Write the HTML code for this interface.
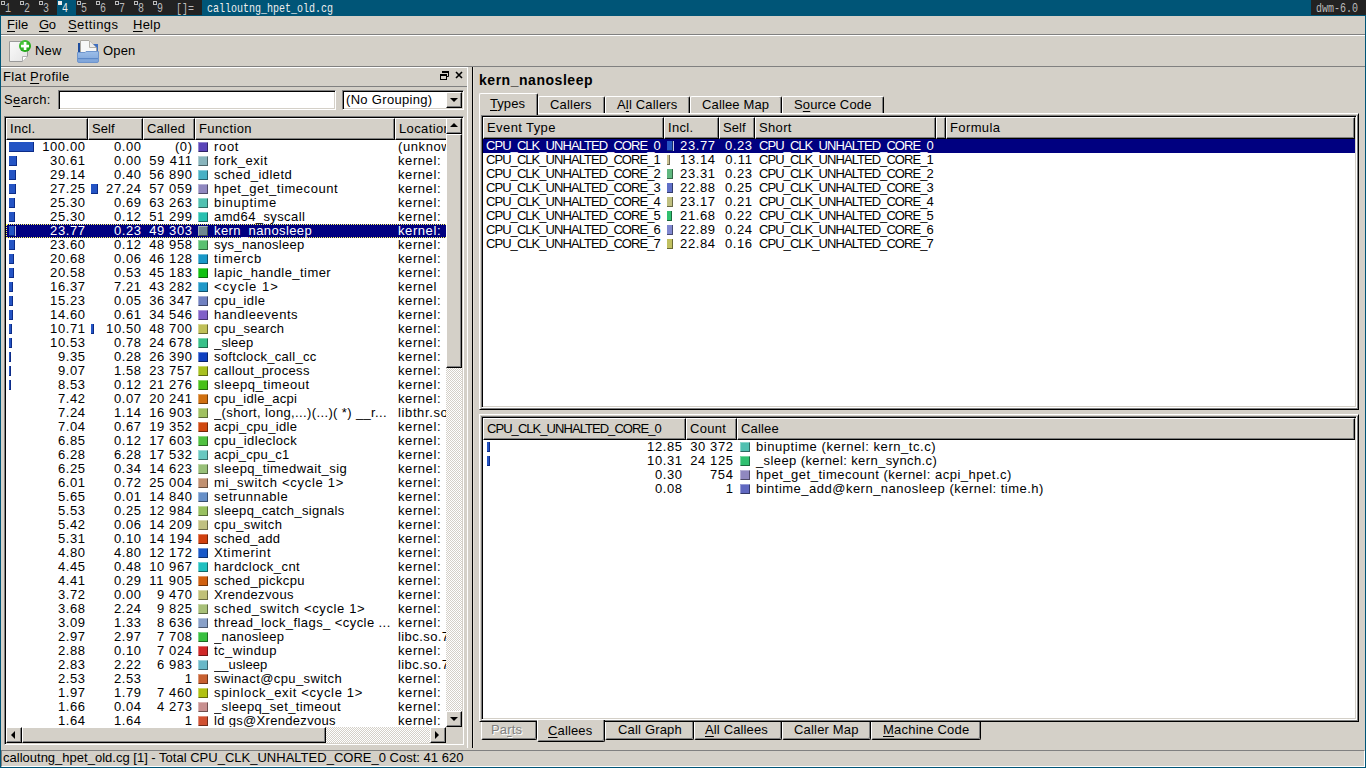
<!DOCTYPE html><html><head><meta charset="utf-8"><style>
*{margin:0;padding:0}
html,body{width:1366px;height:768px;overflow:hidden;background:#d4d0c8;}
body{position:relative;font-family:"Liberation Sans",sans-serif;font-size:13px;line-height:14px;color:#000;}
div{position:absolute;}
svg{position:absolute;}
.t{white-space:pre;height:14px;}
u{text-decoration:underline;text-underline-offset:2px;text-decoration-thickness:1px;}
.m{font-family:"Liberation Mono",monospace;font-size:10px;line-height:10px;white-space:pre;transform:scaleY(1.3);transform-origin:0 0;}
.rz{box-sizing:border-box;background:#d4d0c8;border-top:1px solid #fff;border-left:1px solid #fff;border-right:1px solid #000;border-bottom:1px solid #000;box-shadow:inset -1px -1px 0 #808080;}
.sk{box-sizing:border-box;border-top:1px solid #808080;border-left:1px solid #808080;border-right:1px solid #fff;border-bottom:1px solid #fff;box-shadow:inset 1px 1px 0 #000,inset -1px -1px 0 #d4d0c8;}
.pane{box-sizing:border-box;border-top:1px solid #fff;border-left:1px solid #fff;border-right:1px solid #000;border-bottom:1px solid #000;box-shadow:inset 1px 1px 0 #d4d0c8,inset -1px -1px 0 #808080;}
.tabt{box-sizing:border-box;background:#d4d0c8;border-top:1px solid #fff;border-left:1px solid #fff;border-right:1px solid #000;box-shadow:inset -1px 0 0 #808080;border-radius:2px 2px 0 0;}
.tabt.sel{height:22px;}
.tabb{box-sizing:border-box;background:#d4d0c8;border-bottom:1px solid #000;border-left:1px solid #fff;border-right:1px solid #000;box-shadow:inset -1px -1px 0 #808080;border-radius:0 0 2px 2px;}
.tri-d{width:0;height:0;border-left:4px solid transparent;border-right:4px solid transparent;border-top:4px solid #000;}
.tri-u{width:0;height:0;border-left:4px solid transparent;border-right:4px solid transparent;border-bottom:4px solid #000;}
.tri-l{width:0;height:0;border-top:4px solid transparent;border-bottom:4px solid transparent;border-right:4px solid #000;}
.tri-r{width:0;height:0;border-top:4px solid transparent;border-bottom:4px solid transparent;border-left:4px solid #000;}
</style></head><body>
<div style="left:0px;top:0px;width:1366px;height:15px;background:#222;"></div>
<div style="left:1px;top:1px;width:4px;height:4px;border:1px solid #bbb;box-sizing:border-box;"></div>
<div class="m" style="left:5px;top:3px;color:#bbb;">1</div>
<div style="left:20px;top:1px;width:4px;height:4px;border:1px solid #bbb;box-sizing:border-box;"></div>
<div class="m" style="left:24px;top:3px;color:#bbb;">2</div>
<div style="left:39px;top:1px;width:4px;height:4px;border:1px solid #bbb;box-sizing:border-box;"></div>
<div class="m" style="left:43px;top:3px;color:#bbb;">3</div>
<div style="left:57px;top:0px;width:19px;height:15px;background:#005577;"></div>
<div style="left:58px;top:1px;width:4px;height:4px;background:#eee;"></div>
<div class="m" style="left:62px;top:3px;color:#eee;">4</div>
<div style="left:77px;top:1px;width:4px;height:4px;border:1px solid #bbb;box-sizing:border-box;"></div>
<div class="m" style="left:81px;top:3px;color:#bbb;">5</div>
<div style="left:96px;top:1px;width:4px;height:4px;border:1px solid #bbb;box-sizing:border-box;"></div>
<div class="m" style="left:100px;top:3px;color:#bbb;">6</div>
<div style="left:115px;top:1px;width:4px;height:4px;border:1px solid #bbb;box-sizing:border-box;"></div>
<div class="m" style="left:119px;top:3px;color:#bbb;">7</div>
<div style="left:134px;top:1px;width:4px;height:4px;border:1px solid #bbb;box-sizing:border-box;"></div>
<div class="m" style="left:138px;top:3px;color:#bbb;">8</div>
<div style="left:153px;top:1px;width:4px;height:4px;border:1px solid #bbb;box-sizing:border-box;"></div>
<div class="m" style="left:157px;top:3px;color:#bbb;">9</div>
<div class="m" style="left:176px;top:3px;color:#bbb;">[]=</div>
<div style="left:202px;top:0px;width:1109px;height:15px;background:#005577;"></div>
<div class="m" style="left:207px;top:3px;color:#eee;">calloutng_hpet_old.cg</div>
<div class="m" style="left:1316px;top:3px;color:#bbb;">dwm-6.0</div>
<div style="left:0px;top:15px;width:1366px;height:1px;background:#005577;"></div>
<div style="left:0px;top:15px;width:1px;height:753px;background:#005577;"></div>
<div style="left:1365px;top:15px;width:1px;height:753px;background:#005577;"></div>
<div style="left:0px;top:767px;width:1366px;height:1px;background:#005577;"></div>
<div class="t" style="left:7px;top:18px;letter-spacing:0.054px;"><u>F</u>ile</div>
<div class="t" style="left:39px;top:18px;letter-spacing:-0.409px;"><u>G</u>o</div>
<div class="t" style="left:68px;top:18px;letter-spacing:0.425px;"><u>S</u>ettings</div>
<div class="t" style="left:133px;top:18px;letter-spacing:0.226px;"><u>H</u>elp</div>
<div style="left:1px;top:34px;width:1364px;height:1px;background:#808080;"></div>
<div style="left:1px;top:35px;width:1364px;height:1px;background:#fff;"></div>
<div style="left:1px;top:66px;width:1364px;height:1px;background:#808080;"></div>
<div style="left:1px;top:67px;width:467px;height:1px;background:#fff;"></div>
<div style="left:473px;top:67px;width:1px;height:681px;background:#e4e0d8;"></div>
<div class="t" style="left:35px;top:44px;letter-spacing:0.138px;">New</div>
<div class="t" style="left:103px;top:44px;letter-spacing:0.170px;">Open</div>
<svg style="position:absolute;left:8px;top:39px" width="26" height="24" viewBox="0 0 26 24">
<defs><linearGradient id="pg" x1="0" y1="0" x2="1" y2="1"><stop offset="0" stop-color="#fafafa"/><stop offset="1" stop-color="#e4e4e4"/></linearGradient>
<radialGradient id="gr" cx="0.4" cy="0.35" r="0.7"><stop offset="0" stop-color="#5ad04a"/><stop offset="1" stop-color="#18a010"/></radialGradient></defs>
<path d="M1.5 2.5 H15.5 L19.5 6.5 V17.5 L14.5 22.5 H1.5 Z" fill="url(#pg)" stroke="#9a9a9a"/>
<path d="M14.5 22.5 V17.5 H19.5" fill="#fff" stroke="#b0b0b0"/>
<circle cx="17" cy="7" r="6" fill="url(#gr)"/>
<rect x="15.8" y="3" width="2.6" height="8" fill="#fff"/><rect x="13" y="5.8" width="8" height="2.6" fill="#fff"/>
</svg>
<svg style="position:absolute;left:72px;top:36px" width="32" height="28" viewBox="0 0 32 28">
<defs><linearGradient id="fb" x1="0" y1="0" x2="0" y2="1"><stop offset="0" stop-color="#9cbee9"/><stop offset="1" stop-color="#7da3d8"/></linearGradient></defs>
<rect x="6" y="7" width="3" height="10" fill="#1e4c9c"/>
<path d="M20 8 H26 V17 H20 Z" fill="#3f6fc0"/>
<path d="M8.5 4.5 H17 L24.5 12 V16.5 H8.5 Z" fill="#f7f7f7" stroke="#a9a6a0"/>
<path d="M17.5 5 V11.5 H24" fill="#ececec" stroke="#b4b0a8"/>
<path d="M5.5 16.5 H13 L14 15.5 H26.5 V25 Q26.5 26.5 25 26.5 H7 Q5.5 26.5 5.5 25 Z" fill="url(#fb)" stroke="#6f95cc"/>
<rect x="6" y="22" width="20" height="1.2" fill="#5d89c8"/>
</svg>
<div class="t" style="left:3px;top:70px;letter-spacing:0.363px;">Flat <u>P</u>rofile</div>
<svg style="position:absolute;left:439px;top:70px" width="26" height="12" viewBox="0 0 26 12">
<path d="M3.5 1.5 H9.5 V6.5 H7.5" fill="none" stroke="#000" stroke-width="1"/>
<rect x="3" y="1" width="7" height="2" fill="#000"/>
<rect x="1.5" y="4.5" width="6" height="5" fill="none" stroke="#000"/>
<rect x="1" y="4" width="7" height="2" fill="#000"/>
<path d="M17 2 L23 8 M23 2 L17 8" stroke="#000" stroke-width="1.6"/>
</svg>
<div style="left:1px;top:86px;width:466px;height:1px;background:#808080;"></div>
<div class="t" style="left:4px;top:93px;letter-spacing:0.253px;">S<u>e</u>arch:</div>
<div class="sk" style="left:58px;top:90px;width:278px;height:20px;background:#fff;"></div>
<div class="sk" style="left:342px;top:90px;width:122px;height:20px;background:#fff;"></div>
<div class="t" style="left:346px;top:93px;letter-spacing:0.315px;">(No Grouping)</div>
<div class="rz" style="left:446px;top:92px;width:16px;height:16px;"></div>
<div class="tri-d" style="left:450px;top:98px;"></div>
<div class="sk" style="left:4px;top:116px;width:460px;height:629px;background:#fff;"></div>
<div style="left:6px;top:118px;width:440px;height:22px;overflow:hidden;">
<div class="rz" style="left:0px;top:0px;width:82px;height:22px;"></div>
<div class="t" style="left:4px;top:4px;letter-spacing:0.330px;">Incl.</div>
<div class="rz" style="left:82px;top:0px;width:55px;height:22px;"></div>
<div class="t" style="left:86px;top:4px;letter-spacing:0.094px;">Self</div>
<div class="rz" style="left:137px;top:0px;width:52px;height:22px;"></div>
<div class="t" style="left:141px;top:4px;letter-spacing:0.202px;">Called</div>
<div class="rz" style="left:189px;top:0px;width:200px;height:22px;"></div>
<div class="t" style="left:193px;top:4px;letter-spacing:0.390px;">Function</div>
<div class="rz" style="left:389px;top:0px;width:80px;height:22px;"></div>
<div class="t" style="left:393px;top:4px;letter-spacing:0.385px;">Location</div>
</div>
<div style="left:6px;top:140px;width:440px;height:587px;overflow:hidden;background:#fff;">
<div style="left:3px;top:2px;width:25px;height:10px;background:#2454c4;box-shadow:inset -1px -1px 0 #0c2c88;"></div>
<div class="t" style="left:-40.38px;top:0px;width:120px;text-align:right;letter-spacing:0.617px;">100.00</div>
<div class="t" style="left:15.59px;top:0px;width:120px;text-align:right;letter-spacing:0.589px;">0.00</div>
<div class="t" style="left:66.57px;top:0px;width:120px;text-align:right;letter-spacing:0.574px;">(0)</div>
<div style="left:192px;top:2px;width:10px;height:10px;background:#5a44b8;box-shadow:inset 1px 1px 0 rgba(255,255,255,.35),inset -1px -1px 0 rgba(0,0,0,.45);"></div>
<div style="left:208px;top:0px;width:181px;height:14px;overflow:hidden;">
<div class="t" style="left:0px;top:0px;letter-spacing:0.693px;">root</div>
</div>
<div style="left:392px;top:0px;width:60px;height:14px;overflow:hidden;">
<div class="t" style="left:0px;top:0px;letter-spacing:0.604px;">(unknown)</div>
</div>
<div style="left:3px;top:16px;width:8px;height:10px;background:#2454c4;box-shadow:inset -1px -1px 0 #0c2c88;"></div>
<div class="t" style="left:-40.39px;top:14px;width:120px;text-align:right;letter-spacing:0.606px;">30.61</div>
<div class="t" style="left:15.59px;top:14px;width:120px;text-align:right;letter-spacing:0.589px;">0.00</div>
<div class="t" style="left:66.78px;top:14px;width:120px;text-align:right;letter-spacing:0.779px;">59 411</div>
<div style="left:192px;top:16px;width:10px;height:10px;background:#88b4bc;box-shadow:inset 1px 1px 0 rgba(255,255,255,.35),inset -1px -1px 0 rgba(0,0,0,.45);"></div>
<div style="left:208px;top:14px;width:181px;height:14px;overflow:hidden;">
<div class="t" style="left:0px;top:0px;letter-spacing:0.518px;">fork_exit</div>
</div>
<div style="left:392px;top:14px;width:60px;height:14px;overflow:hidden;">
<div class="t" style="left:0px;top:0px;letter-spacing:0.583px;">kernel:</div>
</div>
<div style="left:3px;top:30px;width:7px;height:10px;background:#2454c4;box-shadow:inset -1px -1px 0 #0c2c88;"></div>
<div class="t" style="left:-40.39px;top:28px;width:120px;text-align:right;letter-spacing:0.606px;">29.14</div>
<div class="t" style="left:15.59px;top:28px;width:120px;text-align:right;letter-spacing:0.589px;">0.40</div>
<div class="t" style="left:66.62px;top:28px;width:120px;text-align:right;letter-spacing:0.617px;">56 890</div>
<div style="left:192px;top:30px;width:10px;height:10px;background:#48b0c4;box-shadow:inset 1px 1px 0 rgba(255,255,255,.35),inset -1px -1px 0 rgba(0,0,0,.45);"></div>
<div style="left:208px;top:28px;width:181px;height:14px;overflow:hidden;">
<div class="t" style="left:0px;top:0px;letter-spacing:0.423px;">sched_idletd</div>
</div>
<div style="left:392px;top:28px;width:60px;height:14px;overflow:hidden;">
<div class="t" style="left:0px;top:0px;letter-spacing:0.583px;">kernel:</div>
</div>
<div style="left:3px;top:44px;width:7px;height:10px;background:#2454c4;box-shadow:inset -1px -1px 0 #0c2c88;"></div>
<div style="left:85px;top:44px;width:7px;height:10px;background:#2454c4;box-shadow:inset -1px -1px 0 #0c2c88;"></div>
<div class="t" style="left:-40.39px;top:42px;width:120px;text-align:right;letter-spacing:0.606px;">27.25</div>
<div class="t" style="left:15.61px;top:42px;width:120px;text-align:right;letter-spacing:0.606px;">27.24</div>
<div class="t" style="left:66.62px;top:42px;width:120px;text-align:right;letter-spacing:0.617px;">57 059</div>
<div style="left:192px;top:44px;width:10px;height:10px;background:#9088c0;box-shadow:inset 1px 1px 0 rgba(255,255,255,.35),inset -1px -1px 0 rgba(0,0,0,.45);"></div>
<div style="left:208px;top:42px;width:181px;height:14px;overflow:hidden;">
<div class="t" style="left:0px;top:0px;letter-spacing:0.555px;">hpet_get_timecount</div>
</div>
<div style="left:392px;top:42px;width:60px;height:14px;overflow:hidden;">
<div class="t" style="left:0px;top:0px;letter-spacing:0.583px;">kernel:</div>
</div>
<div style="left:3px;top:58px;width:6px;height:10px;background:#2454c4;box-shadow:inset -1px -1px 0 #0c2c88;"></div>
<div class="t" style="left:-40.39px;top:56px;width:120px;text-align:right;letter-spacing:0.606px;">25.30</div>
<div class="t" style="left:15.59px;top:56px;width:120px;text-align:right;letter-spacing:0.589px;">0.69</div>
<div class="t" style="left:66.62px;top:56px;width:120px;text-align:right;letter-spacing:0.617px;">63 263</div>
<div style="left:192px;top:58px;width:10px;height:10px;background:#50c0b0;box-shadow:inset 1px 1px 0 rgba(255,255,255,.35),inset -1px -1px 0 rgba(0,0,0,.45);"></div>
<div style="left:208px;top:56px;width:181px;height:14px;overflow:hidden;">
<div class="t" style="left:0px;top:0px;letter-spacing:0.739px;">binuptime</div>
</div>
<div style="left:392px;top:56px;width:60px;height:14px;overflow:hidden;">
<div class="t" style="left:0px;top:0px;letter-spacing:0.583px;">kernel:</div>
</div>
<div style="left:3px;top:72px;width:6px;height:10px;background:#2454c4;box-shadow:inset -1px -1px 0 #0c2c88;"></div>
<div class="t" style="left:-40.39px;top:70px;width:120px;text-align:right;letter-spacing:0.606px;">25.30</div>
<div class="t" style="left:15.59px;top:70px;width:120px;text-align:right;letter-spacing:0.589px;">0.12</div>
<div class="t" style="left:66.62px;top:70px;width:120px;text-align:right;letter-spacing:0.617px;">51 299</div>
<div style="left:192px;top:72px;width:10px;height:10px;background:#28c0b0;box-shadow:inset 1px 1px 0 rgba(255,255,255,.35),inset -1px -1px 0 rgba(0,0,0,.45);"></div>
<div style="left:208px;top:70px;width:181px;height:14px;overflow:hidden;">
<div class="t" style="left:0px;top:0px;letter-spacing:0.403px;">amd64_syscall</div>
</div>
<div style="left:392px;top:70px;width:60px;height:14px;overflow:hidden;">
<div class="t" style="left:0px;top:0px;letter-spacing:0.583px;">kernel:</div>
</div>
<div style="left:0px;top:84px;width:440px;height:14px;background:#000080;"></div>
<div style="left:0px;top:84px;width:440px;height:14px;box-sizing:border-box;border:1px dotted #ffff60;border-right:none;"></div>
<div style="left:3px;top:86px;width:6px;height:10px;background:#2454c4;box-shadow:inset -1px -1px 0 #0c2c88;"></div>
<div style="left:9px;top:86px;width:1px;height:10px;background:#c8c8e8;"></div>
<div class="t" style="left:-40.39px;top:84px;width:120px;text-align:right;letter-spacing:0.606px;color:#fff;">23.77</div>
<div class="t" style="left:15.59px;top:84px;width:120px;text-align:right;letter-spacing:0.589px;color:#fff;">0.23</div>
<div class="t" style="left:66.62px;top:84px;width:120px;text-align:right;letter-spacing:0.617px;color:#fff;">49 303</div>
<div style="left:192px;top:86px;width:10px;height:10px;background:#708890;box-shadow:inset 1px 1px 0 rgba(255,255,255,.35),inset -1px -1px 0 rgba(0,0,0,.45);"></div>
<div style="left:208px;top:84px;width:181px;height:14px;overflow:hidden;">
<div class="t" style="left:0px;top:0px;letter-spacing:0.397px;color:#fff;">kern_nanosleep</div>
</div>
<div style="left:392px;top:84px;width:60px;height:14px;overflow:hidden;">
<div class="t" style="left:0px;top:0px;letter-spacing:0.583px;color:#fff;">kernel:</div>
</div>
<div style="left:3px;top:100px;width:6px;height:10px;background:#2454c4;box-shadow:inset -1px -1px 0 #0c2c88;"></div>
<div class="t" style="left:-40.39px;top:98px;width:120px;text-align:right;letter-spacing:0.606px;">23.60</div>
<div class="t" style="left:15.59px;top:98px;width:120px;text-align:right;letter-spacing:0.589px;">0.12</div>
<div class="t" style="left:66.62px;top:98px;width:120px;text-align:right;letter-spacing:0.617px;">48 958</div>
<div style="left:192px;top:100px;width:10px;height:10px;background:#58c070;box-shadow:inset 1px 1px 0 rgba(255,255,255,.35),inset -1px -1px 0 rgba(0,0,0,.45);"></div>
<div style="left:208px;top:98px;width:181px;height:14px;overflow:hidden;">
<div class="t" style="left:0px;top:0px;letter-spacing:0.293px;">sys_nanosleep</div>
</div>
<div style="left:392px;top:98px;width:60px;height:14px;overflow:hidden;">
<div class="t" style="left:0px;top:0px;letter-spacing:0.583px;">kernel:</div>
</div>
<div style="left:3px;top:114px;width:5px;height:10px;background:#2454c4;box-shadow:inset -1px -1px 0 #0c2c88;"></div>
<div class="t" style="left:-40.39px;top:112px;width:120px;text-align:right;letter-spacing:0.606px;">20.68</div>
<div class="t" style="left:15.59px;top:112px;width:120px;text-align:right;letter-spacing:0.589px;">0.06</div>
<div class="t" style="left:66.62px;top:112px;width:120px;text-align:right;letter-spacing:0.617px;">46 128</div>
<div style="left:192px;top:114px;width:10px;height:10px;background:#1898c8;box-shadow:inset 1px 1px 0 rgba(255,255,255,.35),inset -1px -1px 0 rgba(0,0,0,.45);"></div>
<div style="left:208px;top:112px;width:181px;height:14px;overflow:hidden;">
<div class="t" style="left:0px;top:0px;letter-spacing:0.751px;">timercb</div>
</div>
<div style="left:392px;top:112px;width:60px;height:14px;overflow:hidden;">
<div class="t" style="left:0px;top:0px;letter-spacing:0.583px;">kernel:</div>
</div>
<div style="left:3px;top:128px;width:5px;height:10px;background:#2454c4;box-shadow:inset -1px -1px 0 #0c2c88;"></div>
<div class="t" style="left:-40.39px;top:126px;width:120px;text-align:right;letter-spacing:0.606px;">20.58</div>
<div class="t" style="left:15.59px;top:126px;width:120px;text-align:right;letter-spacing:0.589px;">0.53</div>
<div class="t" style="left:66.62px;top:126px;width:120px;text-align:right;letter-spacing:0.617px;">45 183</div>
<div style="left:192px;top:128px;width:10px;height:10px;background:#10c010;box-shadow:inset 1px 1px 0 rgba(255,255,255,.35),inset -1px -1px 0 rgba(0,0,0,.45);"></div>
<div style="left:208px;top:126px;width:181px;height:14px;overflow:hidden;">
<div class="t" style="left:0px;top:0px;letter-spacing:0.444px;">lapic_handle_timer</div>
</div>
<div style="left:392px;top:126px;width:60px;height:14px;overflow:hidden;">
<div class="t" style="left:0px;top:0px;letter-spacing:0.583px;">kernel:</div>
</div>
<div style="left:3px;top:142px;width:4px;height:10px;background:#2454c4;box-shadow:inset -1px -1px 0 #0c2c88;"></div>
<div class="t" style="left:-40.39px;top:140px;width:120px;text-align:right;letter-spacing:0.606px;">16.37</div>
<div class="t" style="left:15.59px;top:140px;width:120px;text-align:right;letter-spacing:0.589px;">7.21</div>
<div class="t" style="left:66.62px;top:140px;width:120px;text-align:right;letter-spacing:0.617px;">43 282</div>
<div style="left:192px;top:142px;width:10px;height:10px;background:#2098c8;box-shadow:inset 1px 1px 0 rgba(255,255,255,.35),inset -1px -1px 0 rgba(0,0,0,.45);"></div>
<div style="left:208px;top:140px;width:181px;height:14px;overflow:hidden;">
<div class="t" style="left:0px;top:0px;letter-spacing:1.014px;">&lt;cycle 1&gt;</div>
</div>
<div style="left:392px;top:140px;width:60px;height:14px;overflow:hidden;">
<div class="t" style="left:0px;top:0px;letter-spacing:0.584px;">kernel</div>
</div>
<div style="left:3px;top:156px;width:4px;height:10px;background:#2454c4;box-shadow:inset -1px -1px 0 #0c2c88;"></div>
<div class="t" style="left:-40.39px;top:154px;width:120px;text-align:right;letter-spacing:0.606px;">15.23</div>
<div class="t" style="left:15.59px;top:154px;width:120px;text-align:right;letter-spacing:0.589px;">0.05</div>
<div class="t" style="left:66.62px;top:154px;width:120px;text-align:right;letter-spacing:0.617px;">36 347</div>
<div style="left:192px;top:156px;width:10px;height:10px;background:#7080c0;box-shadow:inset 1px 1px 0 rgba(255,255,255,.35),inset -1px -1px 0 rgba(0,0,0,.45);"></div>
<div style="left:208px;top:154px;width:181px;height:14px;overflow:hidden;">
<div class="t" style="left:0px;top:0px;letter-spacing:0.347px;">cpu_idle</div>
</div>
<div style="left:392px;top:154px;width:60px;height:14px;overflow:hidden;">
<div class="t" style="left:0px;top:0px;letter-spacing:0.583px;">kernel:</div>
</div>
<div style="left:3px;top:170px;width:4px;height:10px;background:#2454c4;box-shadow:inset -1px -1px 0 #0c2c88;"></div>
<div class="t" style="left:-40.39px;top:168px;width:120px;text-align:right;letter-spacing:0.606px;">14.60</div>
<div class="t" style="left:15.59px;top:168px;width:120px;text-align:right;letter-spacing:0.589px;">0.61</div>
<div class="t" style="left:66.62px;top:168px;width:120px;text-align:right;letter-spacing:0.617px;">34 546</div>
<div style="left:192px;top:170px;width:10px;height:10px;background:#8060c8;box-shadow:inset 1px 1px 0 rgba(255,255,255,.35),inset -1px -1px 0 rgba(0,0,0,.45);"></div>
<div style="left:208px;top:168px;width:181px;height:14px;overflow:hidden;">
<div class="t" style="left:0px;top:0px;letter-spacing:0.571px;">handleevents</div>
</div>
<div style="left:392px;top:168px;width:60px;height:14px;overflow:hidden;">
<div class="t" style="left:0px;top:0px;letter-spacing:0.583px;">kernel:</div>
</div>
<div style="left:3px;top:184px;width:3px;height:10px;background:#2454c4;box-shadow:inset -1px -1px 0 #0c2c88;"></div>
<div style="left:85px;top:184px;width:3px;height:10px;background:#2454c4;box-shadow:inset -1px -1px 0 #0c2c88;"></div>
<div class="t" style="left:-40.39px;top:182px;width:120px;text-align:right;letter-spacing:0.606px;">10.71</div>
<div class="t" style="left:15.61px;top:182px;width:120px;text-align:right;letter-spacing:0.606px;">10.50</div>
<div class="t" style="left:66.62px;top:182px;width:120px;text-align:right;letter-spacing:0.617px;">48 700</div>
<div style="left:192px;top:184px;width:10px;height:10px;background:#c0c058;box-shadow:inset 1px 1px 0 rgba(255,255,255,.35),inset -1px -1px 0 rgba(0,0,0,.45);"></div>
<div style="left:208px;top:182px;width:181px;height:14px;overflow:hidden;">
<div class="t" style="left:0px;top:0px;letter-spacing:0.311px;">cpu_search</div>
</div>
<div style="left:392px;top:182px;width:60px;height:14px;overflow:hidden;">
<div class="t" style="left:0px;top:0px;letter-spacing:0.583px;">kernel:</div>
</div>
<div style="left:3px;top:198px;width:3px;height:10px;background:#2454c4;box-shadow:inset -1px -1px 0 #0c2c88;"></div>
<div class="t" style="left:-40.39px;top:196px;width:120px;text-align:right;letter-spacing:0.606px;">10.53</div>
<div class="t" style="left:15.59px;top:196px;width:120px;text-align:right;letter-spacing:0.589px;">0.78</div>
<div class="t" style="left:66.62px;top:196px;width:120px;text-align:right;letter-spacing:0.617px;">24 678</div>
<div style="left:192px;top:198px;width:10px;height:10px;background:#38c088;box-shadow:inset 1px 1px 0 rgba(255,255,255,.35),inset -1px -1px 0 rgba(0,0,0,.45);"></div>
<div style="left:208px;top:196px;width:181px;height:14px;overflow:hidden;">
<div class="t" style="left:0px;top:0px;letter-spacing:0.164px;">_sleep</div>
</div>
<div style="left:392px;top:196px;width:60px;height:14px;overflow:hidden;">
<div class="t" style="left:0px;top:0px;letter-spacing:0.583px;">kernel:</div>
</div>
<div style="left:3px;top:212px;width:2px;height:10px;background:#2454c4;box-shadow:inset -1px -1px 0 #0c2c88;"></div>
<div class="t" style="left:-40.41px;top:210px;width:120px;text-align:right;letter-spacing:0.589px;">9.35</div>
<div class="t" style="left:15.59px;top:210px;width:120px;text-align:right;letter-spacing:0.589px;">0.28</div>
<div class="t" style="left:66.62px;top:210px;width:120px;text-align:right;letter-spacing:0.617px;">26 390</div>
<div style="left:192px;top:212px;width:10px;height:10px;background:#1040c0;box-shadow:inset 1px 1px 0 rgba(255,255,255,.35),inset -1px -1px 0 rgba(0,0,0,.45);"></div>
<div style="left:208px;top:210px;width:181px;height:14px;overflow:hidden;">
<div class="t" style="left:0px;top:0px;letter-spacing:0.296px;">softclock_call_cc</div>
</div>
<div style="left:392px;top:210px;width:60px;height:14px;overflow:hidden;">
<div class="t" style="left:0px;top:0px;letter-spacing:0.583px;">kernel:</div>
</div>
<div style="left:3px;top:226px;width:2px;height:10px;background:#2454c4;box-shadow:inset -1px -1px 0 #0c2c88;"></div>
<div class="t" style="left:-40.41px;top:224px;width:120px;text-align:right;letter-spacing:0.589px;">9.07</div>
<div class="t" style="left:15.59px;top:224px;width:120px;text-align:right;letter-spacing:0.589px;">1.58</div>
<div class="t" style="left:66.62px;top:224px;width:120px;text-align:right;letter-spacing:0.617px;">23 757</div>
<div style="left:192px;top:226px;width:10px;height:10px;background:#a8c020;box-shadow:inset 1px 1px 0 rgba(255,255,255,.35),inset -1px -1px 0 rgba(0,0,0,.45);"></div>
<div style="left:208px;top:224px;width:181px;height:14px;overflow:hidden;">
<div class="t" style="left:0px;top:0px;letter-spacing:0.369px;">callout_process</div>
</div>
<div style="left:392px;top:224px;width:60px;height:14px;overflow:hidden;">
<div class="t" style="left:0px;top:0px;letter-spacing:0.583px;">kernel:</div>
</div>
<div style="left:3px;top:240px;width:2px;height:10px;background:#2454c4;box-shadow:inset -1px -1px 0 #0c2c88;"></div>
<div class="t" style="left:-40.41px;top:238px;width:120px;text-align:right;letter-spacing:0.589px;">8.53</div>
<div class="t" style="left:15.59px;top:238px;width:120px;text-align:right;letter-spacing:0.589px;">0.12</div>
<div class="t" style="left:66.62px;top:238px;width:120px;text-align:right;letter-spacing:0.617px;">21 276</div>
<div style="left:192px;top:240px;width:10px;height:10px;background:#48c018;box-shadow:inset 1px 1px 0 rgba(255,255,255,.35),inset -1px -1px 0 rgba(0,0,0,.45);"></div>
<div style="left:208px;top:238px;width:181px;height:14px;overflow:hidden;">
<div class="t" style="left:0px;top:0px;letter-spacing:0.529px;">sleepq_timeout</div>
</div>
<div style="left:392px;top:238px;width:60px;height:14px;overflow:hidden;">
<div class="t" style="left:0px;top:0px;letter-spacing:0.583px;">kernel:</div>
</div>
<div class="t" style="left:-40.41px;top:252px;width:120px;text-align:right;letter-spacing:0.589px;">7.42</div>
<div class="t" style="left:15.59px;top:252px;width:120px;text-align:right;letter-spacing:0.589px;">0.07</div>
<div class="t" style="left:66.62px;top:252px;width:120px;text-align:right;letter-spacing:0.617px;">20 241</div>
<div style="left:192px;top:254px;width:10px;height:10px;background:#d07010;box-shadow:inset 1px 1px 0 rgba(255,255,255,.35),inset -1px -1px 0 rgba(0,0,0,.45);"></div>
<div style="left:208px;top:252px;width:181px;height:14px;overflow:hidden;">
<div class="t" style="left:0px;top:0px;letter-spacing:0.283px;">cpu_idle_acpi</div>
</div>
<div style="left:392px;top:252px;width:60px;height:14px;overflow:hidden;">
<div class="t" style="left:0px;top:0px;letter-spacing:0.583px;">kernel:</div>
</div>
<div class="t" style="left:-40.41px;top:266px;width:120px;text-align:right;letter-spacing:0.589px;">7.24</div>
<div class="t" style="left:15.59px;top:266px;width:120px;text-align:right;letter-spacing:0.589px;">1.14</div>
<div class="t" style="left:66.62px;top:266px;width:120px;text-align:right;letter-spacing:0.617px;">16 903</div>
<div style="left:192px;top:268px;width:10px;height:10px;background:#a0c060;box-shadow:inset 1px 1px 0 rgba(255,255,255,.35),inset -1px -1px 0 rgba(0,0,0,.45);"></div>
<div style="left:208px;top:266px;width:181px;height:14px;overflow:hidden;">
<div class="t" style="left:0px;top:0px;letter-spacing:0.372px;">_(short, long,...)(...)( *) __r...</div>
</div>
<div style="left:392px;top:266px;width:60px;height:14px;overflow:hidden;">
<div class="t" style="left:0px;top:0px;letter-spacing:0.623px;">libthr.so.3</div>
</div>
<div class="t" style="left:-40.41px;top:280px;width:120px;text-align:right;letter-spacing:0.589px;">7.04</div>
<div class="t" style="left:15.59px;top:280px;width:120px;text-align:right;letter-spacing:0.589px;">0.67</div>
<div class="t" style="left:66.62px;top:280px;width:120px;text-align:right;letter-spacing:0.617px;">19 352</div>
<div style="left:192px;top:282px;width:10px;height:10px;background:#d04810;box-shadow:inset 1px 1px 0 rgba(255,255,255,.35),inset -1px -1px 0 rgba(0,0,0,.45);"></div>
<div style="left:208px;top:280px;width:181px;height:14px;overflow:hidden;">
<div class="t" style="left:0px;top:0px;letter-spacing:0.283px;">acpi_cpu_idle</div>
</div>
<div style="left:392px;top:280px;width:60px;height:14px;overflow:hidden;">
<div class="t" style="left:0px;top:0px;letter-spacing:0.583px;">kernel:</div>
</div>
<div class="t" style="left:-40.41px;top:294px;width:120px;text-align:right;letter-spacing:0.589px;">6.85</div>
<div class="t" style="left:15.59px;top:294px;width:120px;text-align:right;letter-spacing:0.589px;">0.12</div>
<div class="t" style="left:66.62px;top:294px;width:120px;text-align:right;letter-spacing:0.617px;">17 603</div>
<div style="left:192px;top:296px;width:10px;height:10px;background:#50c040;box-shadow:inset 1px 1px 0 rgba(255,255,255,.35),inset -1px -1px 0 rgba(0,0,0,.45);"></div>
<div style="left:208px;top:294px;width:181px;height:14px;overflow:hidden;">
<div class="t" style="left:0px;top:0px;letter-spacing:0.388px;">cpu_idleclock</div>
</div>
<div style="left:392px;top:294px;width:60px;height:14px;overflow:hidden;">
<div class="t" style="left:0px;top:0px;letter-spacing:0.583px;">kernel:</div>
</div>
<div class="t" style="left:-40.41px;top:308px;width:120px;text-align:right;letter-spacing:0.589px;">6.28</div>
<div class="t" style="left:15.59px;top:308px;width:120px;text-align:right;letter-spacing:0.589px;">6.28</div>
<div class="t" style="left:66.62px;top:308px;width:120px;text-align:right;letter-spacing:0.617px;">17 532</div>
<div style="left:192px;top:310px;width:10px;height:10px;background:#68c8c0;box-shadow:inset 1px 1px 0 rgba(255,255,255,.35),inset -1px -1px 0 rgba(0,0,0,.45);"></div>
<div style="left:208px;top:308px;width:181px;height:14px;overflow:hidden;">
<div class="t" style="left:0px;top:0px;letter-spacing:0.226px;">acpi_cpu_c1</div>
</div>
<div style="left:392px;top:308px;width:60px;height:14px;overflow:hidden;">
<div class="t" style="left:0px;top:0px;letter-spacing:0.583px;">kernel:</div>
</div>
<div class="t" style="left:-40.41px;top:322px;width:120px;text-align:right;letter-spacing:0.589px;">6.25</div>
<div class="t" style="left:15.59px;top:322px;width:120px;text-align:right;letter-spacing:0.589px;">0.34</div>
<div class="t" style="left:66.62px;top:322px;width:120px;text-align:right;letter-spacing:0.617px;">14 623</div>
<div style="left:192px;top:324px;width:10px;height:10px;background:#98c078;box-shadow:inset 1px 1px 0 rgba(255,255,255,.35),inset -1px -1px 0 rgba(0,0,0,.45);"></div>
<div style="left:208px;top:322px;width:181px;height:14px;overflow:hidden;">
<div class="t" style="left:0px;top:0px;letter-spacing:0.446px;">sleepq_timedwait_sig</div>
</div>
<div style="left:392px;top:322px;width:60px;height:14px;overflow:hidden;">
<div class="t" style="left:0px;top:0px;letter-spacing:0.583px;">kernel:</div>
</div>
<div class="t" style="left:-40.41px;top:336px;width:120px;text-align:right;letter-spacing:0.589px;">6.01</div>
<div class="t" style="left:15.59px;top:336px;width:120px;text-align:right;letter-spacing:0.589px;">0.72</div>
<div class="t" style="left:66.62px;top:336px;width:120px;text-align:right;letter-spacing:0.617px;">25 004</div>
<div style="left:192px;top:338px;width:10px;height:10px;background:#c09070;box-shadow:inset 1px 1px 0 rgba(255,255,255,.35),inset -1px -1px 0 rgba(0,0,0,.45);"></div>
<div style="left:208px;top:336px;width:181px;height:14px;overflow:hidden;">
<div class="t" style="left:0px;top:0px;letter-spacing:0.725px;">mi_switch &lt;cycle 1&gt;</div>
</div>
<div style="left:392px;top:336px;width:60px;height:14px;overflow:hidden;">
<div class="t" style="left:0px;top:0px;letter-spacing:0.583px;">kernel:</div>
</div>
<div class="t" style="left:-40.41px;top:350px;width:120px;text-align:right;letter-spacing:0.589px;">5.65</div>
<div class="t" style="left:15.59px;top:350px;width:120px;text-align:right;letter-spacing:0.589px;">0.01</div>
<div class="t" style="left:66.62px;top:350px;width:120px;text-align:right;letter-spacing:0.617px;">14 840</div>
<div style="left:192px;top:352px;width:10px;height:10px;background:#6890c8;box-shadow:inset 1px 1px 0 rgba(255,255,255,.35),inset -1px -1px 0 rgba(0,0,0,.45);"></div>
<div style="left:208px;top:350px;width:181px;height:14px;overflow:hidden;">
<div class="t" style="left:0px;top:0px;letter-spacing:0.578px;">setrunnable</div>
</div>
<div style="left:392px;top:350px;width:60px;height:14px;overflow:hidden;">
<div class="t" style="left:0px;top:0px;letter-spacing:0.583px;">kernel:</div>
</div>
<div class="t" style="left:-40.41px;top:364px;width:120px;text-align:right;letter-spacing:0.589px;">5.53</div>
<div class="t" style="left:15.59px;top:364px;width:120px;text-align:right;letter-spacing:0.589px;">0.25</div>
<div class="t" style="left:66.62px;top:364px;width:120px;text-align:right;letter-spacing:0.617px;">12 984</div>
<div style="left:192px;top:366px;width:10px;height:10px;background:#98c060;box-shadow:inset 1px 1px 0 rgba(255,255,255,.35),inset -1px -1px 0 rgba(0,0,0,.45);"></div>
<div style="left:208px;top:364px;width:181px;height:14px;overflow:hidden;">
<div class="t" style="left:0px;top:0px;letter-spacing:0.314px;">sleepq_catch_signals</div>
</div>
<div style="left:392px;top:364px;width:60px;height:14px;overflow:hidden;">
<div class="t" style="left:0px;top:0px;letter-spacing:0.583px;">kernel:</div>
</div>
<div class="t" style="left:-40.41px;top:378px;width:120px;text-align:right;letter-spacing:0.589px;">5.42</div>
<div class="t" style="left:15.59px;top:378px;width:120px;text-align:right;letter-spacing:0.589px;">0.06</div>
<div class="t" style="left:66.62px;top:378px;width:120px;text-align:right;letter-spacing:0.617px;">14 209</div>
<div style="left:192px;top:380px;width:10px;height:10px;background:#c0c080;box-shadow:inset 1px 1px 0 rgba(255,255,255,.35),inset -1px -1px 0 rgba(0,0,0,.45);"></div>
<div style="left:208px;top:378px;width:181px;height:14px;overflow:hidden;">
<div class="t" style="left:0px;top:0px;letter-spacing:0.411px;">cpu_switch</div>
</div>
<div style="left:392px;top:378px;width:60px;height:14px;overflow:hidden;">
<div class="t" style="left:0px;top:0px;letter-spacing:0.583px;">kernel:</div>
</div>
<div class="t" style="left:-40.41px;top:392px;width:120px;text-align:right;letter-spacing:0.589px;">5.31</div>
<div class="t" style="left:15.59px;top:392px;width:120px;text-align:right;letter-spacing:0.589px;">0.10</div>
<div class="t" style="left:66.62px;top:392px;width:120px;text-align:right;letter-spacing:0.617px;">14 194</div>
<div style="left:192px;top:394px;width:10px;height:10px;background:#d04010;box-shadow:inset 1px 1px 0 rgba(255,255,255,.35),inset -1px -1px 0 rgba(0,0,0,.45);"></div>
<div style="left:208px;top:392px;width:181px;height:14px;overflow:hidden;">
<div class="t" style="left:0px;top:0px;letter-spacing:0.298px;">sched_add</div>
</div>
<div style="left:392px;top:392px;width:60px;height:14px;overflow:hidden;">
<div class="t" style="left:0px;top:0px;letter-spacing:0.583px;">kernel:</div>
</div>
<div class="t" style="left:-40.41px;top:406px;width:120px;text-align:right;letter-spacing:0.589px;">4.80</div>
<div class="t" style="left:15.59px;top:406px;width:120px;text-align:right;letter-spacing:0.589px;">4.80</div>
<div class="t" style="left:66.62px;top:406px;width:120px;text-align:right;letter-spacing:0.617px;">12 172</div>
<div style="left:192px;top:408px;width:10px;height:10px;background:#1858c8;box-shadow:inset 1px 1px 0 rgba(255,255,255,.35),inset -1px -1px 0 rgba(0,0,0,.45);"></div>
<div style="left:208px;top:406px;width:181px;height:14px;overflow:hidden;">
<div class="t" style="left:0px;top:0px;letter-spacing:0.661px;">Xtimerint</div>
</div>
<div style="left:392px;top:406px;width:60px;height:14px;overflow:hidden;">
<div class="t" style="left:0px;top:0px;letter-spacing:0.583px;">kernel:</div>
</div>
<div class="t" style="left:-40.41px;top:420px;width:120px;text-align:right;letter-spacing:0.589px;">4.45</div>
<div class="t" style="left:15.59px;top:420px;width:120px;text-align:right;letter-spacing:0.589px;">0.48</div>
<div class="t" style="left:66.62px;top:420px;width:120px;text-align:right;letter-spacing:0.617px;">10 967</div>
<div style="left:192px;top:422px;width:10px;height:10px;background:#20c0c0;box-shadow:inset 1px 1px 0 rgba(255,255,255,.35),inset -1px -1px 0 rgba(0,0,0,.45);"></div>
<div style="left:208px;top:420px;width:181px;height:14px;overflow:hidden;">
<div class="t" style="left:0px;top:0px;letter-spacing:0.456px;">hardclock_cnt</div>
</div>
<div style="left:392px;top:420px;width:60px;height:14px;overflow:hidden;">
<div class="t" style="left:0px;top:0px;letter-spacing:0.583px;">kernel:</div>
</div>
<div class="t" style="left:-40.41px;top:434px;width:120px;text-align:right;letter-spacing:0.589px;">4.41</div>
<div class="t" style="left:15.59px;top:434px;width:120px;text-align:right;letter-spacing:0.589px;">0.29</div>
<div class="t" style="left:66.78px;top:434px;width:120px;text-align:right;letter-spacing:0.779px;">11 905</div>
<div style="left:192px;top:436px;width:10px;height:10px;background:#d06010;box-shadow:inset 1px 1px 0 rgba(255,255,255,.35),inset -1px -1px 0 rgba(0,0,0,.45);"></div>
<div style="left:208px;top:434px;width:181px;height:14px;overflow:hidden;">
<div class="t" style="left:0px;top:0px;letter-spacing:0.372px;">sched_pickcpu</div>
</div>
<div style="left:392px;top:434px;width:60px;height:14px;overflow:hidden;">
<div class="t" style="left:0px;top:0px;letter-spacing:0.583px;">kernel:</div>
</div>
<div class="t" style="left:-40.41px;top:448px;width:120px;text-align:right;letter-spacing:0.589px;">3.72</div>
<div class="t" style="left:15.59px;top:448px;width:120px;text-align:right;letter-spacing:0.589px;">0.00</div>
<div class="t" style="left:66.61px;top:448px;width:120px;text-align:right;letter-spacing:0.606px;">9 470</div>
<div style="left:192px;top:450px;width:10px;height:10px;background:#c0c078;box-shadow:inset 1px 1px 0 rgba(255,255,255,.35),inset -1px -1px 0 rgba(0,0,0,.45);"></div>
<div style="left:208px;top:448px;width:181px;height:14px;overflow:hidden;">
<div class="t" style="left:0px;top:0px;letter-spacing:0.362px;">Xrendezvous</div>
</div>
<div style="left:392px;top:448px;width:60px;height:14px;overflow:hidden;">
<div class="t" style="left:0px;top:0px;letter-spacing:0.583px;">kernel:</div>
</div>
<div class="t" style="left:-40.41px;top:462px;width:120px;text-align:right;letter-spacing:0.589px;">3.68</div>
<div class="t" style="left:15.59px;top:462px;width:120px;text-align:right;letter-spacing:0.589px;">2.24</div>
<div class="t" style="left:66.61px;top:462px;width:120px;text-align:right;letter-spacing:0.606px;">9 825</div>
<div style="left:192px;top:464px;width:10px;height:10px;background:#a8c078;box-shadow:inset 1px 1px 0 rgba(255,255,255,.35),inset -1px -1px 0 rgba(0,0,0,.45);"></div>
<div style="left:208px;top:462px;width:181px;height:14px;overflow:hidden;">
<div class="t" style="left:0px;top:0px;letter-spacing:0.635px;">sched_switch &lt;cycle 1&gt;</div>
</div>
<div style="left:392px;top:462px;width:60px;height:14px;overflow:hidden;">
<div class="t" style="left:0px;top:0px;letter-spacing:0.583px;">kernel:</div>
</div>
<div class="t" style="left:-40.41px;top:476px;width:120px;text-align:right;letter-spacing:0.589px;">3.09</div>
<div class="t" style="left:15.59px;top:476px;width:120px;text-align:right;letter-spacing:0.589px;">1.33</div>
<div class="t" style="left:66.61px;top:476px;width:120px;text-align:right;letter-spacing:0.606px;">8 636</div>
<div style="left:192px;top:478px;width:10px;height:10px;background:#88a0c8;box-shadow:inset 1px 1px 0 rgba(255,255,255,.35),inset -1px -1px 0 rgba(0,0,0,.45);"></div>
<div style="left:208px;top:476px;width:181px;height:14px;overflow:hidden;">
<div class="t" style="left:0px;top:0px;letter-spacing:0.424px;">thread_lock_flags_ &lt;cycle ...</div>
</div>
<div style="left:392px;top:476px;width:60px;height:14px;overflow:hidden;">
<div class="t" style="left:0px;top:0px;letter-spacing:0.583px;">kernel:</div>
</div>
<div class="t" style="left:-40.41px;top:490px;width:120px;text-align:right;letter-spacing:0.589px;">2.97</div>
<div class="t" style="left:15.59px;top:490px;width:120px;text-align:right;letter-spacing:0.589px;">2.97</div>
<div class="t" style="left:66.61px;top:490px;width:120px;text-align:right;letter-spacing:0.606px;">7 708</div>
<div style="left:192px;top:492px;width:10px;height:10px;background:#38c040;box-shadow:inset 1px 1px 0 rgba(255,255,255,.35),inset -1px -1px 0 rgba(0,0,0,.45);"></div>
<div style="left:208px;top:490px;width:181px;height:14px;overflow:hidden;">
<div class="t" style="left:0px;top:0px;letter-spacing:0.302px;">_nanosleep</div>
</div>
<div style="left:392px;top:490px;width:60px;height:14px;overflow:hidden;">
<div class="t" style="left:0px;top:0px;letter-spacing:0.419px;">libc.so.7</div>
</div>
<div class="t" style="left:-40.41px;top:504px;width:120px;text-align:right;letter-spacing:0.589px;">2.88</div>
<div class="t" style="left:15.59px;top:504px;width:120px;text-align:right;letter-spacing:0.589px;">0.10</div>
<div class="t" style="left:66.61px;top:504px;width:120px;text-align:right;letter-spacing:0.606px;">7 024</div>
<div style="left:192px;top:506px;width:10px;height:10px;background:#d02828;box-shadow:inset 1px 1px 0 rgba(255,255,255,.35),inset -1px -1px 0 rgba(0,0,0,.45);"></div>
<div style="left:208px;top:504px;width:181px;height:14px;overflow:hidden;">
<div class="t" style="left:0px;top:0px;letter-spacing:0.497px;">tc_windup</div>
</div>
<div style="left:392px;top:504px;width:60px;height:14px;overflow:hidden;">
<div class="t" style="left:0px;top:0px;letter-spacing:0.583px;">kernel:</div>
</div>
<div class="t" style="left:-40.41px;top:518px;width:120px;text-align:right;letter-spacing:0.589px;">2.83</div>
<div class="t" style="left:15.59px;top:518px;width:120px;text-align:right;letter-spacing:0.589px;">2.22</div>
<div class="t" style="left:66.61px;top:518px;width:120px;text-align:right;letter-spacing:0.606px;">6 983</div>
<div style="left:192px;top:520px;width:10px;height:10px;background:#68b8c8;box-shadow:inset 1px 1px 0 rgba(255,255,255,.35),inset -1px -1px 0 rgba(0,0,0,.45);"></div>
<div style="left:208px;top:518px;width:181px;height:14px;overflow:hidden;">
<div class="t" style="left:0px;top:0px;letter-spacing:0.075px;">__usleep</div>
</div>
<div style="left:392px;top:518px;width:60px;height:14px;overflow:hidden;">
<div class="t" style="left:0px;top:0px;letter-spacing:0.419px;">libc.so.7</div>
</div>
<div class="t" style="left:-40.41px;top:532px;width:120px;text-align:right;letter-spacing:0.589px;">2.53</div>
<div class="t" style="left:15.59px;top:532px;width:120px;text-align:right;letter-spacing:0.589px;">2.53</div>
<div class="t" style="left:66.67px;top:532px;width:120px;text-align:right;letter-spacing:0.674px;">1</div>
<div style="left:192px;top:534px;width:10px;height:10px;background:#c86030;box-shadow:inset 1px 1px 0 rgba(255,255,255,.35),inset -1px -1px 0 rgba(0,0,0,.45);"></div>
<div style="left:208px;top:532px;width:181px;height:14px;overflow:hidden;">
<div class="t" style="left:0px;top:0px;letter-spacing:0.401px;">swinact@cpu_switch</div>
</div>
<div style="left:392px;top:532px;width:60px;height:14px;overflow:hidden;">
<div class="t" style="left:0px;top:0px;letter-spacing:0.583px;">kernel:</div>
</div>
<div class="t" style="left:-40.41px;top:546px;width:120px;text-align:right;letter-spacing:0.589px;">1.97</div>
<div class="t" style="left:15.59px;top:546px;width:120px;text-align:right;letter-spacing:0.589px;">1.79</div>
<div class="t" style="left:66.61px;top:546px;width:120px;text-align:right;letter-spacing:0.606px;">7 460</div>
<div style="left:192px;top:548px;width:10px;height:10px;background:#b0c010;box-shadow:inset 1px 1px 0 rgba(255,255,255,.35),inset -1px -1px 0 rgba(0,0,0,.45);"></div>
<div style="left:208px;top:546px;width:181px;height:14px;overflow:hidden;">
<div class="t" style="left:0px;top:0px;letter-spacing:0.665px;">spinlock_exit &lt;cycle 1&gt;</div>
</div>
<div style="left:392px;top:546px;width:60px;height:14px;overflow:hidden;">
<div class="t" style="left:0px;top:0px;letter-spacing:0.583px;">kernel:</div>
</div>
<div class="t" style="left:-40.41px;top:560px;width:120px;text-align:right;letter-spacing:0.589px;">1.66</div>
<div class="t" style="left:15.59px;top:560px;width:120px;text-align:right;letter-spacing:0.589px;">0.04</div>
<div class="t" style="left:66.61px;top:560px;width:120px;text-align:right;letter-spacing:0.606px;">4 273</div>
<div style="left:192px;top:562px;width:10px;height:10px;background:#c89090;box-shadow:inset 1px 1px 0 rgba(255,255,255,.35),inset -1px -1px 0 rgba(0,0,0,.45);"></div>
<div style="left:208px;top:560px;width:181px;height:14px;overflow:hidden;">
<div class="t" style="left:0px;top:0px;letter-spacing:0.368px;">_sleepq_set_timeout</div>
</div>
<div style="left:392px;top:560px;width:60px;height:14px;overflow:hidden;">
<div class="t" style="left:0px;top:0px;letter-spacing:0.583px;">kernel:</div>
</div>
<div class="t" style="left:-40.41px;top:574px;width:120px;text-align:right;letter-spacing:0.589px;">1.64</div>
<div class="t" style="left:15.59px;top:574px;width:120px;text-align:right;letter-spacing:0.589px;">1.64</div>
<div class="t" style="left:66.67px;top:574px;width:120px;text-align:right;letter-spacing:0.674px;">1</div>
<div style="left:192px;top:576px;width:10px;height:10px;background:#d05030;box-shadow:inset 1px 1px 0 rgba(255,255,255,.35),inset -1px -1px 0 rgba(0,0,0,.45);"></div>
<div style="left:208px;top:574px;width:181px;height:14px;overflow:hidden;">
<div class="t" style="left:0px;top:0px;letter-spacing:0.316px;">ld gs@Xrendezvous</div>
</div>
<div style="left:392px;top:574px;width:60px;height:14px;overflow:hidden;">
<div class="t" style="left:0px;top:0px;letter-spacing:0.583px;">kernel:</div>
</div>
</div>
<div style="left:446px;top:118px;width:16px;height:609px;background:repeating-conic-gradient(#fff 0 25%,#d4d0c8 0 50%) 0 0/2px 2px;"></div>
<div class="rz" style="left:446px;top:118px;width:16px;height:16px;"></div>
<div class="tri-u" style="left:450px;top:123px;"></div>
<div class="rz" style="left:446px;top:134px;width:16px;height:234px;"></div>
<div class="rz" style="left:446px;top:711px;width:16px;height:16px;"></div>
<div class="tri-d" style="left:450px;top:717px;"></div>
<div style="left:6px;top:727px;width:440px;height:16px;background:repeating-conic-gradient(#fff 0 25%,#d4d0c8 0 50%) 0 0/2px 2px;"></div>
<div class="rz" style="left:6px;top:727px;width:16px;height:16px;"></div>
<div class="tri-l" style="left:11px;top:731px;"></div>
<div class="rz" style="left:22px;top:727px;width:304px;height:16px;"></div>
<div class="rz" style="left:430px;top:727px;width:16px;height:16px;"></div>
<div class="tri-r" style="left:435px;top:731px;"></div>
<div style="left:446px;top:727px;width:16px;height:16px;background:#d4d0c8;"></div>
<div style="left:467px;top:67px;width:1px;height:681px;background:#fff;"></div>
<div style="left:472px;top:67px;width:1px;height:681px;background:#000;"></div>
<div class="t" style="left:479px;top:73px;letter-spacing:0.532px;font-weight:bold;font-size:14px;">kern_nanosleep</div>
<div class="pane" style="left:479px;top:113px;width:880px;height:297px;"></div>
<div class="tabt sel" style="left:479px;top:93px;width:59px;height:22px;"></div>
<div class="tabt" style="left:538px;top:96px;width:67px;height:17px;"></div>
<div class="tabt" style="left:605px;top:96px;width:85px;height:17px;"></div>
<div class="tabt" style="left:690px;top:96px;width:92px;height:17px;"></div>
<div class="tabt" style="left:782px;top:96px;width:102px;height:17px;"></div>
<div class="t" style="left:490px;top:97px;letter-spacing:0.062px;"><u>T</u>ypes</div>
<div class="t" style="left:550px;top:98px;letter-spacing:0.187px;">Callers</div>
<div class="t" style="left:617px;top:98px;letter-spacing:0.178px;">A<u>l</u>l Callers</div>
<div class="t" style="left:702px;top:98px;letter-spacing:0.146px;">Callee Map</div>
<div class="t" style="left:794px;top:98px;letter-spacing:0.146px;">S<u>o</u>urce Code</div>
<div class="sk" style="left:481px;top:115px;width:876px;height:293px;background:#fff;"></div>
<div class="rz" style="left:483px;top:117px;width:181px;height:22px;"></div>
<div class="t" style="left:487px;top:121px;letter-spacing:0.409px;">Event Type</div>
<div class="rz" style="left:664px;top:117px;width:55px;height:22px;"></div>
<div class="t" style="left:668px;top:121px;letter-spacing:0.330px;">Incl.</div>
<div class="rz" style="left:719px;top:117px;width:36px;height:22px;"></div>
<div class="t" style="left:723px;top:121px;letter-spacing:0.094px;">Self</div>
<div class="rz" style="left:755px;top:117px;width:181px;height:22px;"></div>
<div class="t" style="left:759px;top:121px;letter-spacing:0.339px;">Short</div>
<div class="rz" style="left:936px;top:117px;width:10px;height:22px;"></div>
<div class="rz" style="left:946px;top:117px;width:409px;height:22px;"></div>
<div class="t" style="left:950px;top:121px;letter-spacing:0.384px;">Formula</div>
<div style="left:483px;top:139px;width:872px;height:14px;background:#000080;"></div>
<div style="left:667px;top:141px;width:6px;height:10px;background:#2454c4;box-shadow:inset -1px -1px 0 rgba(0,0,0,.45);"></div>
<div style="left:673px;top:141px;width:1px;height:10px;background:#c8c8e8;"></div>
<div class="t" style="left:486px;top:139px;letter-spacing:-0.949px;color:#fff;">CPU_CLK_UNHALTED_CORE_0</div>
<div class="t" style="left:595.61px;top:139px;width:120px;text-align:right;letter-spacing:0.606px;color:#fff;">23.77</div>
<div class="t" style="left:632.59px;top:139px;width:120px;text-align:right;letter-spacing:0.589px;color:#fff;">0.23</div>
<div class="t" style="left:759px;top:139px;letter-spacing:-0.949px;color:#fff;">CPU_CLK_UNHALTED_CORE_0</div>
<div style="left:667px;top:155px;width:3px;height:10px;background:#c8c090;box-shadow:inset -1px -1px 0 rgba(0,0,0,.45);"></div>
<div class="t" style="left:486px;top:153px;letter-spacing:-0.949px;">CPU_CLK_UNHALTED_CORE_1</div>
<div class="t" style="left:595.61px;top:153px;width:120px;text-align:right;letter-spacing:0.606px;">13.14</div>
<div class="t" style="left:632.83px;top:153px;width:120px;text-align:right;letter-spacing:0.832px;">0.11</div>
<div class="t" style="left:759px;top:153px;letter-spacing:-0.949px;">CPU_CLK_UNHALTED_CORE_1</div>
<div style="left:667px;top:169px;width:6px;height:10px;background:#60b880;box-shadow:inset -1px -1px 0 rgba(0,0,0,.45);"></div>
<div class="t" style="left:486px;top:167px;letter-spacing:-0.949px;">CPU_CLK_UNHALTED_CORE_2</div>
<div class="t" style="left:595.61px;top:167px;width:120px;text-align:right;letter-spacing:0.606px;">23.31</div>
<div class="t" style="left:632.59px;top:167px;width:120px;text-align:right;letter-spacing:0.589px;">0.23</div>
<div class="t" style="left:759px;top:167px;letter-spacing:-0.949px;">CPU_CLK_UNHALTED_CORE_2</div>
<div style="left:667px;top:183px;width:6px;height:10px;background:#6070c8;box-shadow:inset -1px -1px 0 rgba(0,0,0,.45);"></div>
<div class="t" style="left:486px;top:181px;letter-spacing:-0.949px;">CPU_CLK_UNHALTED_CORE_3</div>
<div class="t" style="left:595.61px;top:181px;width:120px;text-align:right;letter-spacing:0.606px;">22.88</div>
<div class="t" style="left:632.59px;top:181px;width:120px;text-align:right;letter-spacing:0.589px;">0.25</div>
<div class="t" style="left:759px;top:181px;letter-spacing:-0.949px;">CPU_CLK_UNHALTED_CORE_3</div>
<div style="left:667px;top:197px;width:6px;height:10px;background:#c0c080;box-shadow:inset -1px -1px 0 rgba(0,0,0,.45);"></div>
<div class="t" style="left:486px;top:195px;letter-spacing:-0.949px;">CPU_CLK_UNHALTED_CORE_4</div>
<div class="t" style="left:595.61px;top:195px;width:120px;text-align:right;letter-spacing:0.606px;">23.17</div>
<div class="t" style="left:632.59px;top:195px;width:120px;text-align:right;letter-spacing:0.589px;">0.21</div>
<div class="t" style="left:759px;top:195px;letter-spacing:-0.949px;">CPU_CLK_UNHALTED_CORE_4</div>
<div style="left:667px;top:211px;width:5px;height:10px;background:#30c070;box-shadow:inset -1px -1px 0 rgba(0,0,0,.45);"></div>
<div class="t" style="left:486px;top:209px;letter-spacing:-0.949px;">CPU_CLK_UNHALTED_CORE_5</div>
<div class="t" style="left:595.61px;top:209px;width:120px;text-align:right;letter-spacing:0.606px;">21.68</div>
<div class="t" style="left:632.59px;top:209px;width:120px;text-align:right;letter-spacing:0.589px;">0.22</div>
<div class="t" style="left:759px;top:209px;letter-spacing:-0.949px;">CPU_CLK_UNHALTED_CORE_5</div>
<div style="left:667px;top:225px;width:6px;height:10px;background:#8088d0;box-shadow:inset -1px -1px 0 rgba(0,0,0,.45);"></div>
<div class="t" style="left:486px;top:223px;letter-spacing:-0.949px;">CPU_CLK_UNHALTED_CORE_6</div>
<div class="t" style="left:595.61px;top:223px;width:120px;text-align:right;letter-spacing:0.606px;">22.89</div>
<div class="t" style="left:632.59px;top:223px;width:120px;text-align:right;letter-spacing:0.589px;">0.24</div>
<div class="t" style="left:759px;top:223px;letter-spacing:-0.949px;">CPU_CLK_UNHALTED_CORE_6</div>
<div style="left:667px;top:239px;width:6px;height:10px;background:#c0c060;box-shadow:inset -1px -1px 0 rgba(0,0,0,.45);"></div>
<div class="t" style="left:486px;top:237px;letter-spacing:-0.949px;">CPU_CLK_UNHALTED_CORE_7</div>
<div class="t" style="left:595.61px;top:237px;width:120px;text-align:right;letter-spacing:0.606px;">22.84</div>
<div class="t" style="left:632.59px;top:237px;width:120px;text-align:right;letter-spacing:0.589px;">0.16</div>
<div class="t" style="left:759px;top:237px;letter-spacing:-0.949px;">CPU_CLK_UNHALTED_CORE_7</div>
<div class="pane" style="left:479px;top:414px;width:880px;height:308px;"></div>
<div class="sk" style="left:481px;top:416px;width:876px;height:304px;background:#fff;"></div>
<div class="rz" style="left:483px;top:418px;width:203px;height:22px;"></div>
<div class="t" style="left:487px;top:422px;letter-spacing:-0.949px;">CPU_CLK_UNHALTED_CORE_0</div>
<div class="rz" style="left:686px;top:418px;width:51px;height:22px;"></div>
<div class="t" style="left:690px;top:422px;letter-spacing:0.311px;">Count</div>
<div class="rz" style="left:737px;top:418px;width:618px;height:22px;"></div>
<div class="t" style="left:741px;top:422px;letter-spacing:0.162px;">Callee</div>
<div style="left:487px;top:442px;width:3px;height:10px;background:#2454c4;box-shadow:inset -1px -1px 0 #0c2c88;"></div>
<div class="t" style="left:562.61px;top:440px;width:120px;text-align:right;letter-spacing:0.606px;">12.85</div>
<div class="t" style="left:613.62px;top:440px;width:120px;text-align:right;letter-spacing:0.617px;">30 372</div>
<div style="left:740px;top:442px;width:10px;height:10px;background:#50c0b0;box-shadow:inset 1px 1px 0 rgba(255,255,255,.35),inset -1px -1px 0 rgba(0,0,0,.45);"></div>
<div class="t" style="left:756px;top:440px;letter-spacing:0.559px;">binuptime (kernel: kern_tc.c)</div>
<div style="left:487px;top:456px;width:3px;height:10px;background:#2454c4;box-shadow:inset -1px -1px 0 #0c2c88;"></div>
<div class="t" style="left:562.61px;top:454px;width:120px;text-align:right;letter-spacing:0.606px;">10.31</div>
<div class="t" style="left:613.62px;top:454px;width:120px;text-align:right;letter-spacing:0.617px;">24 125</div>
<div style="left:740px;top:456px;width:10px;height:10px;background:#30c070;box-shadow:inset 1px 1px 0 rgba(255,255,255,.35),inset -1px -1px 0 rgba(0,0,0,.45);"></div>
<div class="t" style="left:756px;top:454px;letter-spacing:0.393px;">_sleep (kernel: kern_synch.c)</div>
<div class="t" style="left:562.59px;top:468px;width:120px;text-align:right;letter-spacing:0.589px;">0.30</div>
<div class="t" style="left:613.67px;top:468px;width:120px;text-align:right;letter-spacing:0.674px;">754</div>
<div style="left:740px;top:470px;width:10px;height:10px;background:#9088c0;box-shadow:inset 1px 1px 0 rgba(255,255,255,.35),inset -1px -1px 0 rgba(0,0,0,.45);"></div>
<div class="t" style="left:756px;top:468px;letter-spacing:0.508px;">hpet_get_timecount (kernel: acpi_hpet.c)</div>
<div class="t" style="left:562.59px;top:482px;width:120px;text-align:right;letter-spacing:0.589px;">0.08</div>
<div class="t" style="left:613.67px;top:482px;width:120px;text-align:right;letter-spacing:0.674px;">1</div>
<div style="left:740px;top:484px;width:10px;height:10px;background:#6068c0;box-shadow:inset 1px 1px 0 rgba(255,255,255,.35),inset -1px -1px 0 rgba(0,0,0,.45);"></div>
<div class="t" style="left:756px;top:482px;letter-spacing:0.490px;">bintime_add@kern_nanosleep (kernel: time.h)</div>
<div class="tabb" style="left:481px;top:722px;width:56px;height:18px;"></div>
<div class="tabb sel" style="left:537px;top:720px;width:68px;height:22px;"></div>
<div class="tabb" style="left:605px;top:722px;width:89px;height:18px;"></div>
<div class="tabb" style="left:694px;top:722px;width:88px;height:18px;"></div>
<div class="tabb" style="left:782px;top:722px;width:89px;height:18px;"></div>
<div class="tabb" style="left:871px;top:722px;width:110px;height:18px;"></div>
<div class="t" style="left:492px;top:724px;letter-spacing:0.133px;color:#fff;">Pa<u>r</u>ts</div>
<div class="t" style="left:491px;top:723px;letter-spacing:0.133px;color:#808080;">Pa<u>r</u>ts</div>
<div class="t" style="left:548px;top:724px;letter-spacing:0.134px;"><u>C</u>allees</div>
<div class="t" style="left:618px;top:723px;letter-spacing:0.176px;">Call Graph</div>
<div class="t" style="left:705px;top:723px;letter-spacing:0.144px;"><u>A</u>ll Callees</div>
<div class="t" style="left:794px;top:723px;letter-spacing:0.183px;">Caller Map</div>
<div class="t" style="left:883px;top:723px;letter-spacing:0.208px;"><u>M</u>achine Code</div>
<div style="left:1px;top:750px;width:1364px;height:17px;box-sizing:border-box;border-top:1px solid #808080;border-left:1px solid #808080;border-bottom:1px solid #fff;border-right:1px solid #fff;"></div>
<div class="t" style="left:3px;top:751px;letter-spacing:0.008px;">calloutng_hpet_old.cg [1] - Total CPU_CLK_UNHALTED_CORE_0 Cost: 41 620</div>
</body></html>
